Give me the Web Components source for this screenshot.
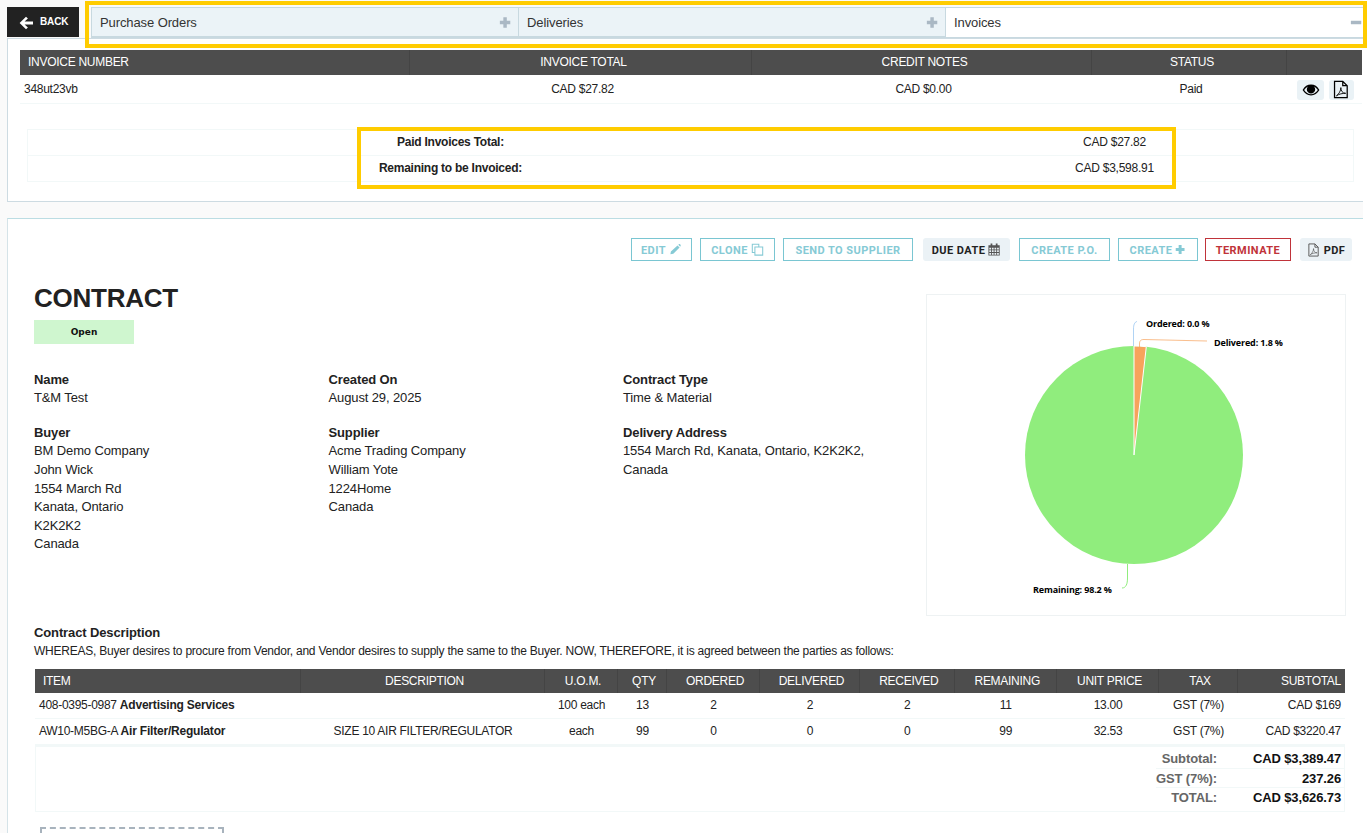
<!DOCTYPE html>
<html>
<head>
<meta charset="utf-8">
<title>Contract</title>
<style>
html, body { margin: 0; height: 833px; overflow: hidden; background: #fff; }
body { font: 13px/18.57px "Liberation Sans", Arial, sans-serif; color: #222; letter-spacing: -.12px; }
</style>
</head>
<body>

<contract-app>
  <div style="position:relative">
    <top-bar>
      <back-button>BACK</back-button>
      <acc-tab>Purchase Orders</acc-tab>
      <acc-tab>Deliveries</acc-tab>
      <acc-tab open>Invoices</acc-tab>
    </top-bar>
    <high-light style="left:78px;top:-6px;width:1282px;height:47px"></high-light>
  </div>

  <plain-panel kind="invoices">
    <t-table style="--cols:390px 342px 340px 195px 74px;--data-pad:3px;--head-pad:6px">
      <t-row head>
        <t-cell pad="8">INVOICE NUMBER</t-cell>
        <t-cell center>INVOICE TOTAL</t-cell>
        <t-cell center>CREDIT NOTES</t-cell>
        <t-cell center>STATUS</t-cell>
        <t-cell></t-cell>
      </t-row>
      <t-row style="--row-h:28px">
        <t-cell>348ut23vb</t-cell>
        <t-cell center>CAD $27.82</t-cell>
        <t-cell center>CAD $0.00</t-cell>
        <t-cell center>Paid</t-cell>
        <t-cell pad="10">
          <icon-button icon="eye"></icon-button>
          <icon-button icon="pdf"></icon-button>
        </t-cell>
      </t-row>
    </t-table>
    <summary-box>
      <t-row style="--row-h:25px"><t-cell center><b>Paid Invoices Total:</b></t-cell><t-cell center>CAD $27.82</t-cell></t-row>
      <t-row style="--row-h:25px"><t-cell center><b>Remaining to be Invoiced:</b></t-cell><t-cell center>CAD $3,598.91</t-cell></t-row>
      <high-light style="left:329px;top:-3px;width:819px;height:62px"></high-light>
    </summary-box>
  </plain-panel>

  <plain-panel kind="contract">
    <action-bar>
      <action-button w="61" icon="pencil">EDIT</action-button>
      <action-button w="75" icon="clone">CLONE</action-button>
      <action-button w="130">SEND TO SUPPLIER</action-button>
      <action-button w="87" kind="soft" icon="calendar" style="margin-left:2px">DUE DATE</action-button>
      <action-button w="91" style="margin-left:1px">CREATE P.O.</action-button>
      <action-button w="80" icon="plus">CREATE</action-button>
      <action-button w="86" kind="danger" style="margin-left:-1px">TERMINATE</action-button>
      <action-button w="52" kind="soft" icon="pdf" before style="margin-left:1px">PDF</action-button>
    </action-bar>

    <contract-head>
      <div>
        <contract-title>CONTRACT</contract-title>
        <status-badge>Open</status-badge>
        <info-grid>
          <info-block label="Name">T&amp;M Test</info-block>
          <info-block label="Created On">August 29, 2025</info-block>
          <info-block label="Contract Type">Time &amp; Material</info-block>
          <info-block label="Buyer">BM Demo Company<br>John Wick<br>1554 March Rd<br>Kanata, Ontario<br>K2K2K2<br>Canada</info-block>
          <info-block label="Supplier">Acme Trading Company<br>William Yote<br>1224Home<br>Canada</info-block>
          <info-block label="Delivery Address">1554 March Rd, Kanata, Ontario, K2K2K2,<br>Canada</info-block>
        </info-grid>
      </div>
      <pie-chart></pie-chart>
    </contract-head>

    <contract-description label="Contract Description">WHEREAS, Buyer desires to procure from Vendor, and Vendor desires to supply the same to the Buyer. NOW, THEREFORE, it is agreed between the parties as follows:</contract-description>

    <t-table style="--cols:266px 244px 73px 49px 93px 100px 94.5px 102.5px 102.1px 78.9px 107px;margin-left:1px;margin-right:10px">
      <t-row head style="--row-h:24px">
        <t-cell pad="8">ITEM</t-cell>
        <t-cell center>DESCRIPTION</t-cell>
        <t-cell center>U.O.M.</t-cell>
        <t-cell center>QTY</t-cell>
        <t-cell center>ORDERED</t-cell>
        <t-cell center>DELIVERED</t-cell>
        <t-cell center>RECEIVED</t-cell>
        <t-cell center>REMAINING</t-cell>
        <t-cell center>UNIT PRICE</t-cell>
        <t-cell center>TAX</t-cell>
        <t-cell right>SUBTOTAL</t-cell>
      </t-row>
      <t-row style="--row-h:25px">
        <t-cell><span>408-0395-0987 <b style="letter-spacing:-.2px">Advertising Services</b></span></t-cell>
        <t-cell center></t-cell>
        <t-cell center>100 each</t-cell>
        <t-cell center>13</t-cell>
        <t-cell center>2</t-cell>
        <t-cell center>2</t-cell>
        <t-cell center>2</t-cell>
        <t-cell center>11</t-cell>
        <t-cell center>13.00</t-cell>
        <t-cell center>GST (7%)</t-cell>
        <t-cell right>CAD $169</t-cell>
      </t-row>
      <t-row style="--row-h:25px">
        <t-cell><span>AW10-M5BG-A <b style="letter-spacing:-.2px">Air Filter/Regulator</b></span></t-cell>
        <t-cell center>SIZE 10 AIR FILTER/REGULATOR</t-cell>
        <t-cell center>each</t-cell>
        <t-cell center>99</t-cell>
        <t-cell center>0</t-cell>
        <t-cell center>0</t-cell>
        <t-cell center>0</t-cell>
        <t-cell center>99</t-cell>
        <t-cell center>32.53</t-cell>
        <t-cell center>GST (7%)</t-cell>
        <t-cell right>CAD $3220.47</t-cell>
      </t-row>
      <totals-box>
        <total-line label="Subtotal:">CAD $3,389.47</total-line>
        <total-line label="GST (7%):">237.26</total-line>
        <total-line label="TOTAL:" last>CAD $3,626.73</total-line>
      </totals-box>
    </t-table>

    <drop-zone></drop-zone>
  </plain-panel>
</contract-app>

<script>
"use strict";
const ICONS = {
    arrow: `<path fill="currentColor" d="M7 1.2 8.9 3.1 5.6 6.1H14V8.9H5.6L8.9 11.9 7 13.8.6 7.5Z"/>`,
    plus: `<path fill="currentColor" d="M5 1H9V5H13V9H9V13H5V9H1V5H5Z"/>`,
    minus: `<path fill="currentColor" d="M1 5H13V9H1Z"/>`,
    pencil: `<path fill="currentColor" d="M9.8 2.4 12.2 4.8 5 12 1.6 12.6 2.2 9.2ZM10.7 1.5 11.4.8c.4-.3.9-.3 1.2 0L13.4 1.6c.3.3.3.8 0 1.2L13 3.8Z"/>`,
    clone: `<path fill="none" stroke="currentColor" stroke-width="1.2" d="M4 10.5H1.5V1H9V4M4.5 4H13.5V13.5H4.5Z"/>`,
    calendar: `<path fill="currentColor" fill-rule="evenodd" d="M3 0H5V2H9V0H11V2H13.5V14H.5V2H3ZM1.5 5V7H3.5V5ZM4.5 5V7H6.5V5ZM7.5 5V7H9.5V5ZM10.5 5V7H12.5V5ZM1.5 8V10H3.5V8ZM4.5 8V10H6.5V8ZM7.5 8V10H9.5V8ZM10.5 8V10H12.5V8ZM1.5 11V13H3.5V11ZM4.5 11V13H6.5V11ZM7.5 11V13H9.5V11ZM10.5 11V13H12.5V11Z"/>`,
    pdf: `<path fill="none" stroke="currentColor" d="M2 .5H8.5L12 4V13.5H2ZM8.5.5V4H12"/><path fill="none" stroke="currentColor" stroke-width=".7" d="M3.5 12C5.5 10.5 7 8 7 5.5 7 8 8.2 10 10.8 10 8.5 10 5.5 10.5 3.5 12Z"/>`,
    eye: `<path fill="currentColor" fill-rule="evenodd" d="M.5 7C2.2 4 4.5 2.5 7.5 2.5S12.8 4 14.5 7C12.8 10 10.5 11.5 7.5 11.5S2.2 10 .5 7ZM1.8 7C3.2 9.2 5.2 10.5 7.5 10.5S11.8 9.2 13.2 7C12.3 5.6 11.3 4.6 10 4 10.6 4.7 11 5.5 11 6.5A3.5 3.5 0 0 1 4 6.5C4 5.5 4.4 4.7 5 4 3.7 4.6 2.7 5.6 1.8 7Z"/>`
};
function svgIcon(name, size) {
    return `<svg width="${size}" height="${size}" viewBox="0 0 15 14" style="display:block;flex:none">${ICONS[name]}</svg>`;
}

// small base so each element only states its css and markup
class ShadowEl extends HTMLElement {
    constructor() {
        super();
        this.attachShadow({ mode: "open" });
    }
    connectedCallback() {
        this.shadowRoot.innerHTML = `<style>${this.css()}</style>${this.html()}`;
    }
    css() { return ":host{display:block}"; }
    html() { return "<slot></slot>"; }
}

customElements.define("contract-app", class extends ShadowEl {
    css() {
        return `:host{display:block;width:1363px;height:833px;box-sizing:border-box;padding:7px 0 0 7px;background:#fafafa}`;
    }
});

customElements.define("top-bar", class extends ShadowEl {
    css() { return `:host{display:flex;height:31px}`; }
});

customElements.define("back-button", class extends ShadowEl {
    css() {
        return `:host{display:flex;align-items:center;gap:6px;box-sizing:border-box;width:72px;height:30px;margin-right:12px;padding-left:12px;background:#222;color:#fff;font-size:10px;font-weight:700}`;
    }
    html() { return `${svgIcon("arrow", 15)}<slot></slot>`; }
});

customElements.define("acc-tab", class extends ShadowEl {
    css() {
        return `:host{display:flex;align-items:center;justify-content:space-between;flex:0 0 427px;box-sizing:border-box;height:31px;padding:2px 6px 0 8px;background:#ebf3f7;border:1px solid #c8d9e0;border-width:1px 0 2px 1px;color:#333;font-size:13px;letter-spacing:-.1px}
        :host([open]){background:#fff;flex-basis:418px;border-bottom-width:1px;padding:1px 0 0 8px}
        span{color:#aab8c4;margin-top:-1px}`;
    }
    html() {
        const open = this.hasAttribute("open");
        return `<slot></slot><span>${svgIcon(open ? "minus" : "plus", 13)}</span>`;
    }
});

customElements.define("plain-panel", class extends ShadowEl {
    css() {
        return `:host{display:block;box-sizing:border-box;background:#fff}
        :host([kind=invoices]){height:164px;padding:11px 1px 0 12px;border:1px solid #cddbe2;border-right:0}
        :host([kind=contract]){margin-top:16px;padding:19px 8px 0 26px;border-top:1px solid #bcdde3;border-left:1px solid #d5e3e8;height:615px;overflow:hidden}`;
    }
});

customElements.define("t-table", class extends ShadowEl {
    css() { return `:host{display:block;font-size:12px;color:#222;letter-spacing:-.28px}`; }
});

customElements.define("t-row", class extends ShadowEl {
    css() {
        return `:host{display:grid;grid-template-columns:var(--cols);min-height:var(--row-h,25px);border-bottom:1px solid #f2f8f8}
        :host([head]){background:#4d4d4d;color:#fff;border-bottom:0;--cell-line:1px solid #444;--data-pad:var(--head-pad,4px)}`;
    }
});

customElements.define("t-cell", class extends ShadowEl {
    css() {
        const pad = this.getAttribute("pad") || 4;
        return `:host{display:flex;align-items:center;gap:5px;box-sizing:border-box;padding:0 4px 0 ${pad}px;border-right:var(--cell-line,0);white-space:pre}
        :host(:last-child){border-right:0}
        :host([center]){justify-content:center;padding:0 0 0 var(--data-pad,0)}
        :host([right]){justify-content:flex-end;padding:0 4px 0 0}`;
    }
});

customElements.define("icon-button", class extends ShadowEl {
    css() {
        return `:host{display:flex;align-items:center;justify-content:center;flex:none;width:27px;height:20px;margin-top:1px;background:#eaf2f6;border-radius:3px;color:#000}
        :host([icon=pdf]){width:25px}`;
    }
    html() {
        const name = this.getAttribute("icon");
        return svgIcon(name, name === "eye" ? 18 : 19);
    }
});

customElements.define("summary-box", class extends ShadowEl {
    css() {
        return `:host{display:block;position:relative;--cols:845px 483px;margin:25px 8px 0 7px;border:1px solid #f2f8f8;border-bottom:0;font-size:12px;letter-spacing:-.25px}`;
    }
});

customElements.define("high-light", class extends ShadowEl {
    css() {
        return `:host{display:block;position:absolute;box-sizing:border-box;border:4px solid #ffcc00;pointer-events:none}`;
    }
    html() { return ""; }
});

customElements.define("action-bar", class extends ShadowEl {
    css() {
        return `:host{display:flex;justify-content:flex-end;gap:8px;height:23px;margin-right:3px;font-family:Roboto,"Liberation Sans",sans-serif}`;
    }
});

customElements.define("action-button", class extends ShadowEl {
    css() {
        return `:host{display:flex;align-items:center;justify-content:center;gap:3px;flex:none;box-sizing:border-box;height:23px;border:1px solid #7ac6d2;color:#86cad5;font-size:11px;line-height:12px;font-weight:700;letter-spacing:.45px;width:${this.getAttribute("w")}px}
        :host([kind=soft]){background:#ebf2f6;border:0;border-radius:3px;color:#222}
        :host([kind=danger]){border-color:#c0333a;color:#c0333a}
        .t{display:block;margin-top:2px}
        .i{color:#86cad5}
        :host([kind=soft]) .i{color:#555}`;
    }
    html() {
        const icon = this.getAttribute("icon");
        const size = icon === "pdf" ? 14 : icon === "plus" ? 11 : 13;
        const i = icon ? `<span class="i">${svgIcon(icon, size)}</span>` : "";
        const t = `<span class="t"><slot></slot></span>`;
        return this.hasAttribute("before") ? i + t : t + i;
    }
});

customElements.define("contract-head", class extends ShadowEl {
    css() {
        return `:host{display:grid;grid-template-columns:892px 420px;margin-top:22px}
        ::slotted(pie-chart){margin-top:11px}`;
    }
});

customElements.define("contract-title", class extends ShadowEl {
    css() { return `:host{display:block;height:30px;font-size:26px;line-height:30px;font-weight:700;color:#222;letter-spacing:-.25px}`; }
});

customElements.define("status-badge", class extends ShadowEl {
    css() {
        return `:host{display:block;width:100px;height:24px;margin-top:7px;background:#cff6cf;color:#111;font:700 9px/24px "DejaVu Sans",sans-serif;text-align:center;letter-spacing:0}`;
    }
});

customElements.define("info-grid", class extends ShadowEl {
    css() {
        return `:host{display:grid;grid-template-columns:294.5px 294.5px 1fr;row-gap:16px;margin-top:26.7px}`;
    }
});

customElements.define("info-block", class extends ShadowEl {
    css() { return `:host{display:block}b{display:block}`; }
    html() { return `<b>${this.getAttribute("label")}</b><slot></slot>`; }
});

customElements.define("contract-description", class extends ShadowEl {
    css() {
        return `:host{display:block;margin-top:8px;margin-bottom:8.6px;font-size:12px;letter-spacing:-.23px}
        b{display:block;height:18px;font-size:13px;letter-spacing:-.12px}`;
    }
    html() { return `<b>${this.getAttribute("label")}</b><slot></slot>`; }
});

customElements.define("pie-chart", class extends ShadowEl {
    css() {
        return `:host{display:block;box-sizing:border-box;width:420px;height:322px;border:1px solid #eef2f3;background:#fff}
        svg{display:block}
        text{font:700 9px "Open Sans",sans-serif;fill:#000;letter-spacing:-.15px}`;
    }
    html() {
        // viewBox is in page pixels, so the slices read like the screenshot
        return `<svg width="418" height="320" viewBox="927 295 418 320">
            <circle cx="1134" cy="455" r="109" fill="#90ed7d"/>
            <path d="M1134 455L1146.3 346.7A109 109 0 0 0 1134 346Z" fill="#f7a35c" stroke="#fff"/>
            <path d="M1133.5 346V329C1133.5 325 1134.5 322 1137 321.5" fill="none" stroke="#7cb5ec" stroke-opacity=".6"/>
            <path d="M1139.5 347V344C1139.5 341 1140.5 339.5 1144 339.5L1207 341" fill="none" stroke="#f7a35c" stroke-opacity=".7"/>
            <path d="M1127.5 564V578C1127.5 584 1126 588 1122 588" fill="none" stroke="#90ed7d"/>
            <text x="1146" y="327">Ordered: 0.0 %</text>
            <text x="1214" y="346">Delivered: 1.8 %</text>
            <text x="1033" y="593">Remaining: 98.2 %</text>
        </svg>`;
    }
});

customElements.define("totals-box", class extends ShadowEl {
    css() {
        return `:host{display:block;box-sizing:border-box;height:67px;padding:2px 0 0 1120px;border:1px solid #f2f8f8;border-top:2px solid #f2f8f8;font-size:13px;letter-spacing:-.12px}`;
    }
});

customElements.define("total-line", class extends ShadowEl {
    css() {
        return `:host{display:grid;grid-template-columns:65px 1fr;align-items:start;height:19.5px;line-height:19px;border-bottom:1px solid #f2f8f8;font-weight:700;color:#111;box-sizing:border-box}
        :host([last]){border-bottom:0}
        span{color:#666;text-align:right;padding-right:4px;white-space:nowrap}
        div{text-align:right;padding-right:3px}`;
    }
    html() { return `<span>${this.getAttribute("label")}</span><div><slot></slot></div>`; }
});

customElements.define("drop-zone", class extends ShadowEl {
    css() {
        return `:host{display:block;box-sizing:border-box;width:184px;height:60px;margin:15px 0 0 6px;border:2px dashed #a8b3bd}`;
    }
    html() { return ""; }
});
</script>
</body>
</html>
